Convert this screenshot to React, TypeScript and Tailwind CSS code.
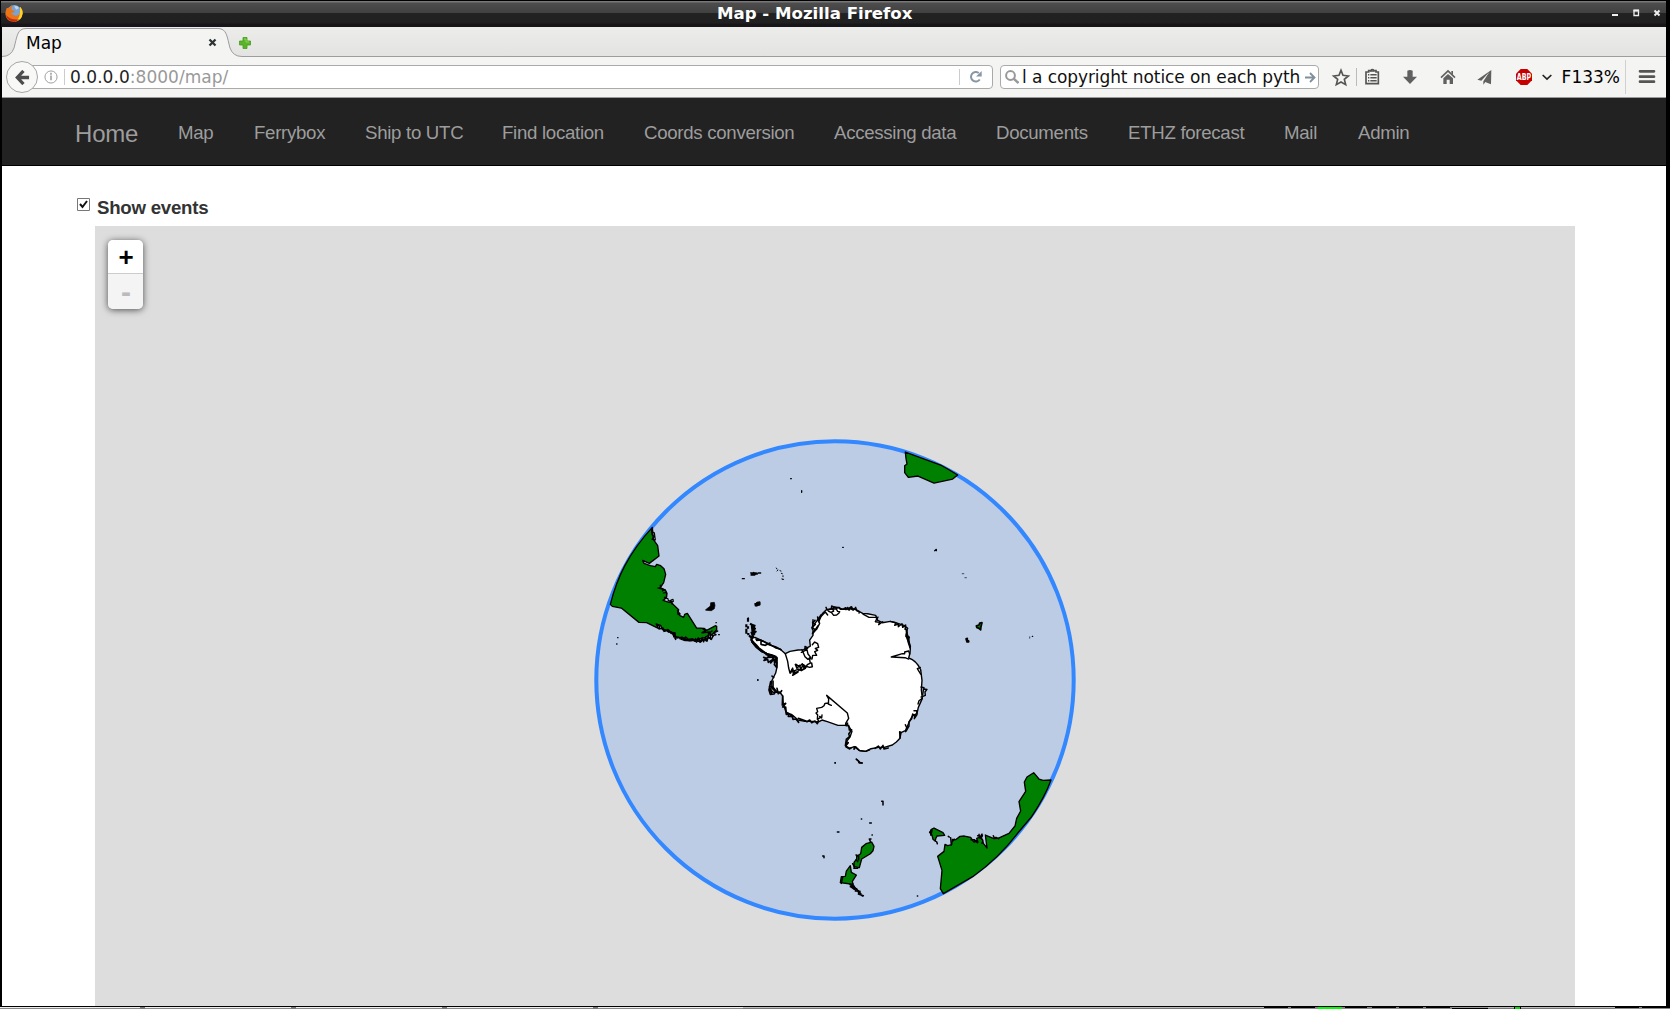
import React from 'react';

const navItems = [
  { label: 'Map', box: 'w-[76px]' },
  { label: 'Ferrybox', box: 'w-[111px]' },
  { label: 'Ship to UTC', box: 'w-[137px]' },
  { label: 'Find location', box: 'w-[142px]' },
  { label: 'Coords conversion', box: 'w-[190px]' },
  { label: 'Accessing data', box: 'w-[162px]' },
  { label: 'Documents', box: 'w-[132px]' },
  { label: 'ETHZ forecast', box: 'w-[156px]' },
  { label: 'Mail', box: 'w-[74px]' },
  { label: 'Admin', box: 'w-[92px]' },
];

function FirefoxLogo() {
  return (
    <svg className="ml-1 mt-[3px] h-[18px] w-[18px] shrink-0" viewBox="0 0 54 54">
      <circle cx="28" cy="25" r="22" fill="#7aa3d0" />
      <path d="M28 5 Q38 4 42 12 L35 17 L30 12 Z" fill="#bdd3e8" />
      <path d="M5 12 Q2 20 1 29 Q3 53 27 53 Q51 51 53 27 Q53 16 45 8 Q48 17 45 23 Q43 36 31 35 Q22 34 19 27 L28 25 L29 20 L20 18 Q18 11 23 5 Q14 7 11 12 Z" fill="#e87518" />
      <path d="M45 8 Q54 17 53 29 Q49 51 29 53 Q45 44 45 23 Z" fill="#ffd326" />
      <path d="M3 33 Q7 53 29 53 Q38 52 43 46 Q18 50 3 33 Z" fill="#c92b10" />
    </svg>
  );
}

function TitleBar() {
  return (
    <div className="flex h-[27px] border-t border-black bg-[linear-gradient(to_bottom,#777_0px,#777_1px,#4d4d4d_2px,#404040_12px,#222_12px,#202020_22px,#171519_23px)]">
      <FirefoxLogo />
      <div className="ml-[694px] whitespace-nowrap text-[16.6px] font-bold leading-[26px] text-white">Map - Mozilla Firefox</div>
      <svg className="ml-auto mt-2 h-[9px] w-[60px]" viewBox="0 0 60 9">
        <path d="M6 6h6" stroke="#eee" strokeWidth="2" />
        <path d="M28 1.500h4.500v5h-4.500z" fill="none" stroke="#eee" strokeWidth="1.300" />
        <path d="M27.500 1.500h5.500" stroke="#eee" strokeWidth="2" />
        <path d="M48.500 1.500l5 5m0-5l-5 5" stroke="#eee" strokeWidth="2" />
      </svg>
    </div>
  );
}

function TabStrip() {
  return (
    <div className="h-[30px] bg-gradient-to-b from-[#ececeb] to-[#e3e3e1]">
      <div className="relative flex h-[30px] items-center">
        <svg className="absolute inset-0 h-[30px] w-[1664px]" viewBox="2 27 1664 30" fill="none">
          <path d="M2 57V56.500Q11 56.500 14 48C17 37 17 28.500 26 28.500H218C227 28.500 227 37 230 48Q233 56.500 242 56.500V57Z" fill="#f4f4f2" />
          <path d="M2 56.500Q11 56.500 14 48C17 37 17 28.500 26 28.500H218C227 28.500 227 37 230 48Q233 56.500 242 56.500H1666" stroke="#9d9d9f" />
        </svg>
        <div className="relative ml-6 mt-0.5 w-[181.5px] text-[17px] leading-[30px] text-black">Map</div>
        <svg className="relative mt-px h-[9px] w-[9px]" viewBox="0 0 9 9"><path d="M1.500 1.500l6 6m0-6l-6 6" stroke="#2e3436" strokeWidth="2.300" /></svg>
        <svg className="relative ml-[22.5px] mt-0.5 h-3 w-3" viewBox="0 0 12 12"><path d="M4 .5h4V4h3.500v4H8v3.500H4V8H.5V4H4z" fill="#59b526" stroke="#459a22" strokeWidth=".8" /><path d="M5 2h2v3h3" fill="none" stroke="#8bd75c" /></svg>
      </div>
    </div>
  );
}

function ToolbarIcons() {
  return (
    <svg className="absolute left-[1326px] top-0 h-10 w-[338px]" viewBox="84 171 1014 120">
      <path d="M123 211L129 226L145 228L133 238L137 254L123 246L109 254L113 238L101 228L117 226Z" fill="none" stroke="#555" strokeWidth="5" />
      <path d="M169.500 204v54" stroke="#bbb" strokeWidth="3" />
      <path d="M198 216h8v-4h6q5-6 10 0h6v4h7v35h-37z" fill="none" stroke="#555" strokeWidth="5" />
      <path d="M204 224h4m3 0h19m-26 9h4m3 0h19m-26 9h4m3 0h19M210 213h13" stroke="#555" strokeWidth="4.500" />
      <path d="M322 212q8-4 16 0v18h13l-21 22l-21-22h13z" fill="#606060" />
      <path d="M423 233l21-20l21 20" fill="none" stroke="#606060" strokeWidth="5" />
      <path d="M430 235l14-13l15 13v17h-10v-13h-9v13h-10zM454 213h5v12l-5-5z" fill="#606060" />
      <path d="M574 210l-42 29l12 3l24-26l-18 28v10l6-8l7 3l10 4z" fill="#606060" />
      <path d="M662 207h20l14 14v20l-14 14h-20l-14-14v-20z" fill="#c60000" />
      <text x="672" y="239" textAnchor="middle" textLength="43" lengthAdjust="spacingAndGlyphs" fill="white" fontSize="24" fontWeight="bold" fontFamily="DejaVu Sans">ABP</text>
      <path d="M728 225l13 12l13-12" fill="none" stroke="#222" strokeWidth="5" />
      <path d="M976.500 180v102" stroke="#d0d0d0" strokeWidth="3" />
      <path d="M1020 214h42m-42 16h42m-42 15h42" stroke="#555" strokeWidth="8" strokeLinecap="round" />
    </svg>
  );
}

function Toolbar() {
  return (
    <div className="relative flex h-[41px] border-b border-[#9b9b9b] bg-[#f4f4f2] pl-1 text-[17px]">
      <div className="z-10 mt-1 flex h-8 w-8 shrink-0 items-center justify-center rounded-full border border-[#a6a6a6] bg-[#f8f8f7]">
        <svg className="h-[15px] w-[15px]" viewBox="0 0 16 16"><path d="M9 1L2.500 8L9 15M3 8h12" fill="none" stroke="#4d4d4d" strokeWidth="3.500" /></svg>
      </div>
      <div className="-ml-2 mt-2 flex h-6 w-[963px] shrink-0 items-center rounded-r-sm border border-[#aaa] bg-white">
        <svg className="ml-[13px] h-[14px] w-[14px]" viewBox="0 0 15 15"><circle cx="7.500" cy="7.500" r="6.500" fill="none" stroke="#999" /><path d="M7.500 3v2M7.500 6v5" stroke="#999" strokeWidth="1.600" /></svg>
        <div className="ml-1.5 mr-[5px] h-4 w-px bg-[#ccc]" />
        <div className="flex-1 whitespace-nowrap leading-6 tracking-[0.04px] text-[#999]"><span className="text-[#222]">0.0.0.0</span>:8000/map/</div>
        <div className="h-4 w-px bg-[#ccc]" />
        <svg className="ml-2.5 mr-2.5 h-3 w-3" viewBox="0 0 12 12"><path d="M9.800 8.500A4.800 4.800 0 1 1 8.800 2" fill="none" stroke="#8997a5" strokeWidth="2" /><path d="M6 5.500h5.700V0z" fill="#8997a5" /></svg>
      </div>
      <div className="ml-[7px] mt-2 flex h-6 w-[319px] shrink-0 items-center rounded-sm border border-[#aaa] bg-white">
        <svg className="ml-1 h-[14px] w-[14px] shrink-0" viewBox="0 0 14 14"><circle cx="5.500" cy="5.500" r="4.400" fill="none" stroke="#999" strokeWidth="2" /><path d="M8.500 8.500l5 4.500" stroke="#999" strokeWidth="2.400" /></svg>
        <div className="ml-[3px] w-[280px] shrink-0 whitespace-nowrap leading-6 tracking-[-0.08px] text-[#111]">l a copyright notice on each pyth</div>
        <svg className="ml-[3px] h-[11px] w-[11px] shrink-0" viewBox="0 0 11 11"><path d="M0 5.500h9M5 1l4.500 4.500L5 10" fill="none" stroke="#7f8f9c" strokeWidth="1.800" /></svg>
      </div>
      <ToolbarIcons />
      <div className="ml-auto mr-[46px] leading-10 text-black">F133%</div>
    </div>
  );
}

function PolarMap() {
  return (
    <svg className="block h-[780px] w-[1480px]" viewBox="95 226 1480 780" strokeLinejoin="round" strokeLinecap="round">
      <circle cx="835" cy="680" r="238.700" fill="#bccce5" stroke="#3388ff" strokeWidth="4" />
      {/* South America and the Falklands */}
      <g transform="translate(590 429.700) scale(.333333)" stroke="black" strokeWidth="4" fill="#008000">
        <path d="M187 293Q137 347 105 407Q78 457 61 524L67 530L94 535L147 578L170 579L205 596L199 583L212 587L218 600L232 602L255 615L260 625L276 622L290 630H318L346 623L356 616L365 616L380 600V590L377 588L350 602L342 596L320 595L292 551L284 554L281 563L270 558L263 550L266 540L248 523L244 516L237 518L219 512L229 504L231 491L226 481L211 474L221 459L227 434L222 417L212 408L200 404L196 411L181 408L162 401L158 392L178 401L207 379L203 348L190 329Z" />
        <path d="M199 583l10 7-2 8 12-3 3 10 13-5 7 9 13 0-4 12 16 2 13 6 7-7 8 7 13-2 8 8 9-10 7 10 11-7 7 6 5-11 9 6 6-12 8-2-7-6 12-5M245 607l12 22-2-18M280 626l8 5 12 2 15-3 17 7 11-9 6 6M339 597l7 7-10 5 22-2-3 6 11-9" fill="none" strokeWidth="4.500" />
        <path d="M216 598l9 7-2-6 13 9-4-9 12 13-2-7 11 8m16 14l16 6 19-1 18 3 19-6 13-2M316 626l4 12 6-13 4 13 7-15 4 14 6-16 5 13 2-16 8 10-1-17 8 9M184 299l2 16 7 6-7 8 10 2-3-22-8-3M211 466l0 9-8 0 17 4-3 5 8-4M220 490l9-2 1 15-7 0 11 4 1 7 6-1-1 6 10-4-1-6-6 2 3 12M262 543l9 10-7 1" fill="none" strokeWidth="3.500" />
        <path d="M347 540l14-11 1-10 11-1 2 9-2 10-9 6-15-1z" fill="black" strokeWidth="2" />
        <path d="M482 430h17l-5 6h-11l8-8M486 433h16M504 430h8M498 524l3-5 8-2v8l-8 3zM457 447h6M602 147h2M635 183v5M758 353h2M80 643h1M83 624h1M386 615h2M378 579h1M503 751h1" fill="none" strokeWidth="4" />
        <path d="M559 415l2 3m0 6l3-3m6 2l3 1m1 7l3 1m2 6v3m-3 6v2h5" fill="none" strokeWidth="2.800" />
      </g>
      {/* Antarctica */}
      <g transform="translate(730 589.700) scale(.333333)" stroke="black" strokeWidth="4.200" fill="white">
        <path d="M63 145L75 143L103 156L121 165L138 175L150 178L166 192L180 185L204 181L221 180L241 169L239 151L249 137L249 121L246 116L255 101L264 89L279 70L289 60L306 58L313 52L324 53L339 59L362 55L380 61L398 71L413 72L437 77L443 92L457 99L481 95L499 100L524 108L533 116L529 124L535 143L541 177L540 190L536 205Q559 212 572 240L576 272L574 301L577 326L565 353L561 371L547 379L538 396L531 412L526 423L513 429L510 446L499 457L487 466L463 473L445 473L423 477L407 485L389 483L373 471L357 476L348 472L350 455L360 442L366 425L357 411L348 402L346 407H324L292 396L276 391L264 397L249 395L225 395L204 391L194 382L184 374L169 370L160 344L158 319L149 307L130 308L123 302L124 276L130 264L137 250L141 232L141 203L126 197L111 192L95 185L78 171L66 157Z" />
        <path d="M247 132l14-15 8-16-5-10m-15-1l-1 20m4 15l12-17m8-32l-4 10 18-19 7 9m2-12l8 4 8-4-4-7 12 1 4 7 6 1-2 4-7 6-9 1-7-9M342 56l6 4 5-7 5 8 7-10 4 11 8-9 4 11 7 1-1 5M399 73l18 10 23 0-1 8M444 82l-8 14 13 2-3 7 12-9M481 95l17 4-4 8 11-4 0 8 11-9 2 11 9-7-2 13M528 118l3 12-1 8 8 4-4 14 6 18" fill="none" />
        <path d="M528 140l3-18-3 15 6 16-2-10 9 28M255 92l-7 7 8 5-10 9 9 7-6 9M263 82l3 14 6-14-9 8" fill="none" strokeWidth="5" />
        <path d="M484 202l33-10h7v-5l12-3 3 9M486 202l39 2 11 4M571 233l-9 4 10 16M573 292l9 2v4l9 1-6 8 1 10-13 5M581 295l-3 20M577 326l-10 7-3 10M290 317L352 370L356 386L347 401M290 317l6 11-1 15 9 4M296 340l-11 1-3 7-7 5-15 3 3 10-5 4 5 6-1 13 10-6M276 376l-1 9-6-5" fill="none" />
        <path d="M166 192l7 23 3 20 4 15 8-15 2 9 16-6 8 5 12-7 6-11 9-5-3-15 8 3 2-11 12 0-6-11 9-4-7-6 10-3-3-11-9-5-7 8M216 180l9 21 9 8 8-6-8-10-3-13-17 8M232 174l-7-4 0 8 8-2" fill="none" />
        <path d="M182 250l5-11 3 13 12-6 7-6 10-1 8-7M196 224l5 12 8-9 3 10 9-12 5 9M198 224l10 7 9-9 5 12M194 245l-6 12 16-10M225 229l14 4 8-2-2-11" fill="none" strokeWidth="4.500" />
        <path d="M80 152l13-1 0 13 13 3 14-7M78 148l22 7 19 11 17 5 17 9M66 157l14 17 15 12 13 4 9 8 14 1 9 7" fill="none" strokeWidth="5" />
        <path d="M64 126l5 15-5 10 8 9 6 6 8 9 12 9 12 9 14 3 15 6M66 104v9m8-8l-4 12 5 0-8 5 10 4-8 5 6 4M54 84v12m-5 8v9m5-3v7m-5 0v15m6-2v7M60 102l16 8m-10 2l3 24M57 138l10 6M54 86h2" fill="none" strokeWidth="6.500" strokeLinecap="butt" />
        <path d="M101 203l8 3-7 6 11-3 2 9 9-6-2 8 10-12 2 13 4-13M109 195l12 2-9 6 19-1-4 8 11-3M140 205v28l-7-9M132 210l9 10" fill="none" strokeWidth="5" />
        <path d="M122 276l-5 25 4 13 11-1 4-6 14 3 5-7M124 291l12 15M129 274l0 25M126 259l5 4m-3 28l10 13m3-8l4 16M158 319l-1 27 10-5-9 11 9 0 2 22 7-3-1 9 12 0 2 9 9-1 8 10M170 368l20 12-3 4M205 386l21 7 5 3 8-5 6 8 10-5 7 8 3-10M125 309l-7-18" fill="none" strokeWidth="5" />
        <path d="M353 400l-5 8 8-1 2 14 7-1-9 13 3 7-10 9-1 6 7 4-8 10 11 9 7-4M349 448l-3 20 14 9M373 471l-1 8 5-8 11 11 19 3 12-5M435 476l10-7 6 9 8-11 3 11 13-3M513 429l-4-3 1 19M526 405l6 13-5 8 10-17 0-13 8-9 3-14 7 4-2 10 8-12-1-12-8 0M288 53l4 8 12-4 1-8 15 7 7-3 4 6 11 0 4-5 9 6 7-8 2 7" fill="none" strokeWidth="4.500" />
        <path d="M75 42h5l2-4h7v7h-8v3h-5zM379 509l7 5 2 5 9 1M315 519h1M83 271h1" fill="black" />
      </g>
      {/* Southern Africa and sub-Antarctic islands */}
      <g transform="translate(850 429.700) scale(.333333)" stroke="black" strokeWidth="4" fill="#008000">
        <path d="M166 67L272 106Q299 121 323 136L308 148L252 160L204 139L175 143L164 129V108L171 103L168 86Z" />
        <path d="M379 588l8-2 2-6 7-1-3 12-1 10-5-5-7-3zM348 627l4-1v6l4 2v3h-5z" strokeWidth="5" />
        <path d="M254 363l5-4v4M547 620h1" fill="none" />
        <path d="M337 432h4M345 444h4M539 625v-3" fill="none" stroke="#52657a" />
      </g>
      {/* New Zealand, Tasmania and southern Australia */}
      <g transform="translate(810 749.700) scale(.333333)" stroke="black" strokeWidth="4" fill="#008000">
        <path d="M671 69L678 77L687 88L699 92L723 91Q705 142 664 202L621 253Q567 324 488 381L400 432L391 417L396 362L383 320L402 305L405 284L413 288L425 285L427 269L437 270L450 260L463 259L482 263L490 275L504 277L500 266L508 263L518 270L520 281L531 295L526 256L552 267L564 266L597 251L615 229L620 206L632 184L627 156L647 125L643 97L651 82Z" />
        <path d="M363 240l9-5 27 14 5 8-23 2-4 8-1 8-7-6-3-13-6-8zM185 277l7 13-3 13-8 9-26 16-7 26-16-3 0-13 8-10 0-8 12-8 3-19 13-11zM121 348l3 20 15 8-12 19 3 13 23 24-31-29-31-4 3-18 12-1 3-16z" />
        <path d="M359 248l7-7-3 16-2-10M380 276l2 6M424 286l-2-22M428 274l5-5M483 270l11 0-2 7 7-5 3 7M507 254l2 10 7-11-2 13M518 257l-5 8 6 7-3 9M415 260l3 2M503 258l8 2M550 258l3 7 5-2 8 4M181 275l-3-7M128 342l5 9-1 5 11 0M138 316l8 3 0 12M139 330l4 6M120 405l9-2-8 8 12-1-3 7 10 0-4 7 14 1-5 8 15 5M122 411l11 8M143 422l4 10 11 7M98 382l-4 19M215 155h4v11m0-11v11M184 220h-5M181 268h2M186 256h1M154 208h1M82 247h5M38 319h4v5M322 439h1M75 40h1M139 28l6 6 2 5 9 1" fill="none" strokeWidth="4.500" />
        <path d="M519 257l4 0-4 21z" fill="#bccce5" stroke="none" />
      </g>
    </svg>
  );
}

function ZoomControl() {
  return (
    <div className="absolute left-[13px] top-[14px] w-[35px] rounded-[5px] pb-px text-center font-['Liberation_Sans'] font-bold shadow-[0_1px_7px_rgba(0,0,0,0.65)]">
      <button className="block h-[34px] w-full rounded-t-[5px] border-b border-[#ccc] bg-white pl-px text-[26px] leading-[34px] text-black">+</button>
      <button className="-mb-px block h-[35px] w-full rounded-b-[5px] bg-[#f4f4f4] pl-px text-[30px] leading-[33px] text-[#bbb]">-</button>
    </div>
  );
}

function Taskbar() {
  return (
    <div className="flex h-[3px] flex-col">
      <div className="h-px bg-black" />
      <div className="flex h-0.5 bg-[linear-gradient(to_bottom,#bcbcbc_50%,#777_50%)]">
        <div className="h-0.5 w-[140px] bg-[linear-gradient(to_bottom,#ededed_50%,#888_50%)]" />
        <div className="h-0.5 w-[5px] bg-[#777]" />
        <div className="h-0.5 w-[146px] bg-[linear-gradient(to_bottom,#ededed_50%,#888_50%)]" />
        <div className="h-0.5 w-[5px] bg-[#777]" />
        <div className="h-0.5 w-[146px] bg-[linear-gradient(to_bottom,#ededed_50%,#888_50%)]" />
        <div className="h-0.5 w-[5px] bg-[#777]" />
        <div className="h-0.5 w-[146px] bg-[linear-gradient(to_bottom,#ededed_50%,#888_50%)]" />
        <div className="h-0.5 w-[5px] bg-[#777]" />
        <div className="h-0.5 w-[145px] bg-[linear-gradient(to_bottom,#ededed_50%,#888_50%)]" />
        <div className="h-0.5 w-[521px]" />
        <div className="h-0.5 w-[24px] bg-[linear-gradient(to_bottom,#000_50%,#888_50%)]" />
        <div className="h-0.5 w-[3px] bg-[#888]" />
        <div className="h-0.5 w-[24px] bg-[linear-gradient(to_bottom,#000_50%,#888_50%)]" />
        <div className="h-0.5 w-[3px] bg-[#888]" />
        <div className="h-0.5 w-[24px] bg-[#00ff00]" />
        <div className="h-0.5 w-[3px] bg-[#888]" />
        <div className="h-0.5 w-[22px] bg-[linear-gradient(to_bottom,#000_50%,#888_50%)]" />
        <div className="h-0.5 w-[5px] bg-[#888]" />
        <div className="h-0.5 w-[24px] bg-[linear-gradient(to_bottom,#000_50%,#888_50%)]" />
        <div className="h-0.5 w-[3px] bg-[#888]" />
        <div className="h-0.5 w-[24px] bg-[linear-gradient(to_bottom,#000_50%,#888_50%)]" />
        <div className="h-0.5 w-[3px] bg-[#888]" />
        <div className="h-0.5 w-[24px] bg-[linear-gradient(to_bottom,#000_50%,#888_50%)]" />
        <div className="h-0.5 w-[2px] bg-[#888]" />
        <div className="h-0.5 w-[36px] bg-[linear-gradient(to_bottom,#999_50%,#000_50%)]" />
        <div className="h-0.5 w-[26px]" />
        <div className="h-0.5 w-[7px] border-x border-black bg-[#00e600]" />
        <div className="h-0.5 w-[94px]" />
        <div className="h-0.5 w-[24px] bg-[linear-gradient(to_bottom,#000_50%,#888_50%)]" />
        <div className="h-0.5 w-[3px] bg-[#888]" />
        <div className="h-0.5 flex-1 bg-[linear-gradient(to_bottom,#000_50%,#888_50%)]" />
      </div>
    </div>
  );
}

export default function App() {
  return (
    <div className="flex h-[1009px] w-[1670px] flex-col overflow-hidden bg-black font-['DejaVu_Sans',sans-serif]">
      <div className="w-[1666px] pl-px"><TitleBar /></div>
      <div className="ml-0.5 h-[979px] w-[1664px] bg-white">
        <TabStrip />
        <Toolbar />
        <nav className="flex h-[68px] border-b border-black bg-[#222] pl-[73px] font-['Liberation_Sans',sans-serif] leading-[69px] text-[#9d9d9d]">
          <a className="w-[103px] text-[24px] leading-[71px] tracking-[-0.2px]">Home</a>
          {navItems.map((item) => (
            <a key={item.label} className={`${item.box} shrink-0 whitespace-nowrap text-[18.67px] tracking-[-0.3px]`}>{item.label}</a>
          ))}
        </nav>
        <main>
          <label className="flex h-[60px] pl-[74.5px] pt-8 font-['Liberation_Sans',sans-serif]">
            <svg className="h-[13px] w-[13px]" viewBox="0 0 13 13"><path d="M.5.5h12v12H.5z" fill="white" stroke="#777" /><path d="M3 6l2.500 3L10 3" fill="none" stroke="#111" strokeWidth="2" /></svg>
            <span className="ml-[7.5px] mt-[-1px] text-[18.67px] font-bold leading-[22px] tracking-[-0.25px] text-[#333]">Show events</span>
          </label>
          <div className="relative ml-[93px] h-[780px] w-[1480px] overflow-hidden bg-[#ddd]">
            <PolarMap />
            <ZoomControl />
          </div>
        </main>
      </div>
      <Taskbar />
    </div>
  );
}
